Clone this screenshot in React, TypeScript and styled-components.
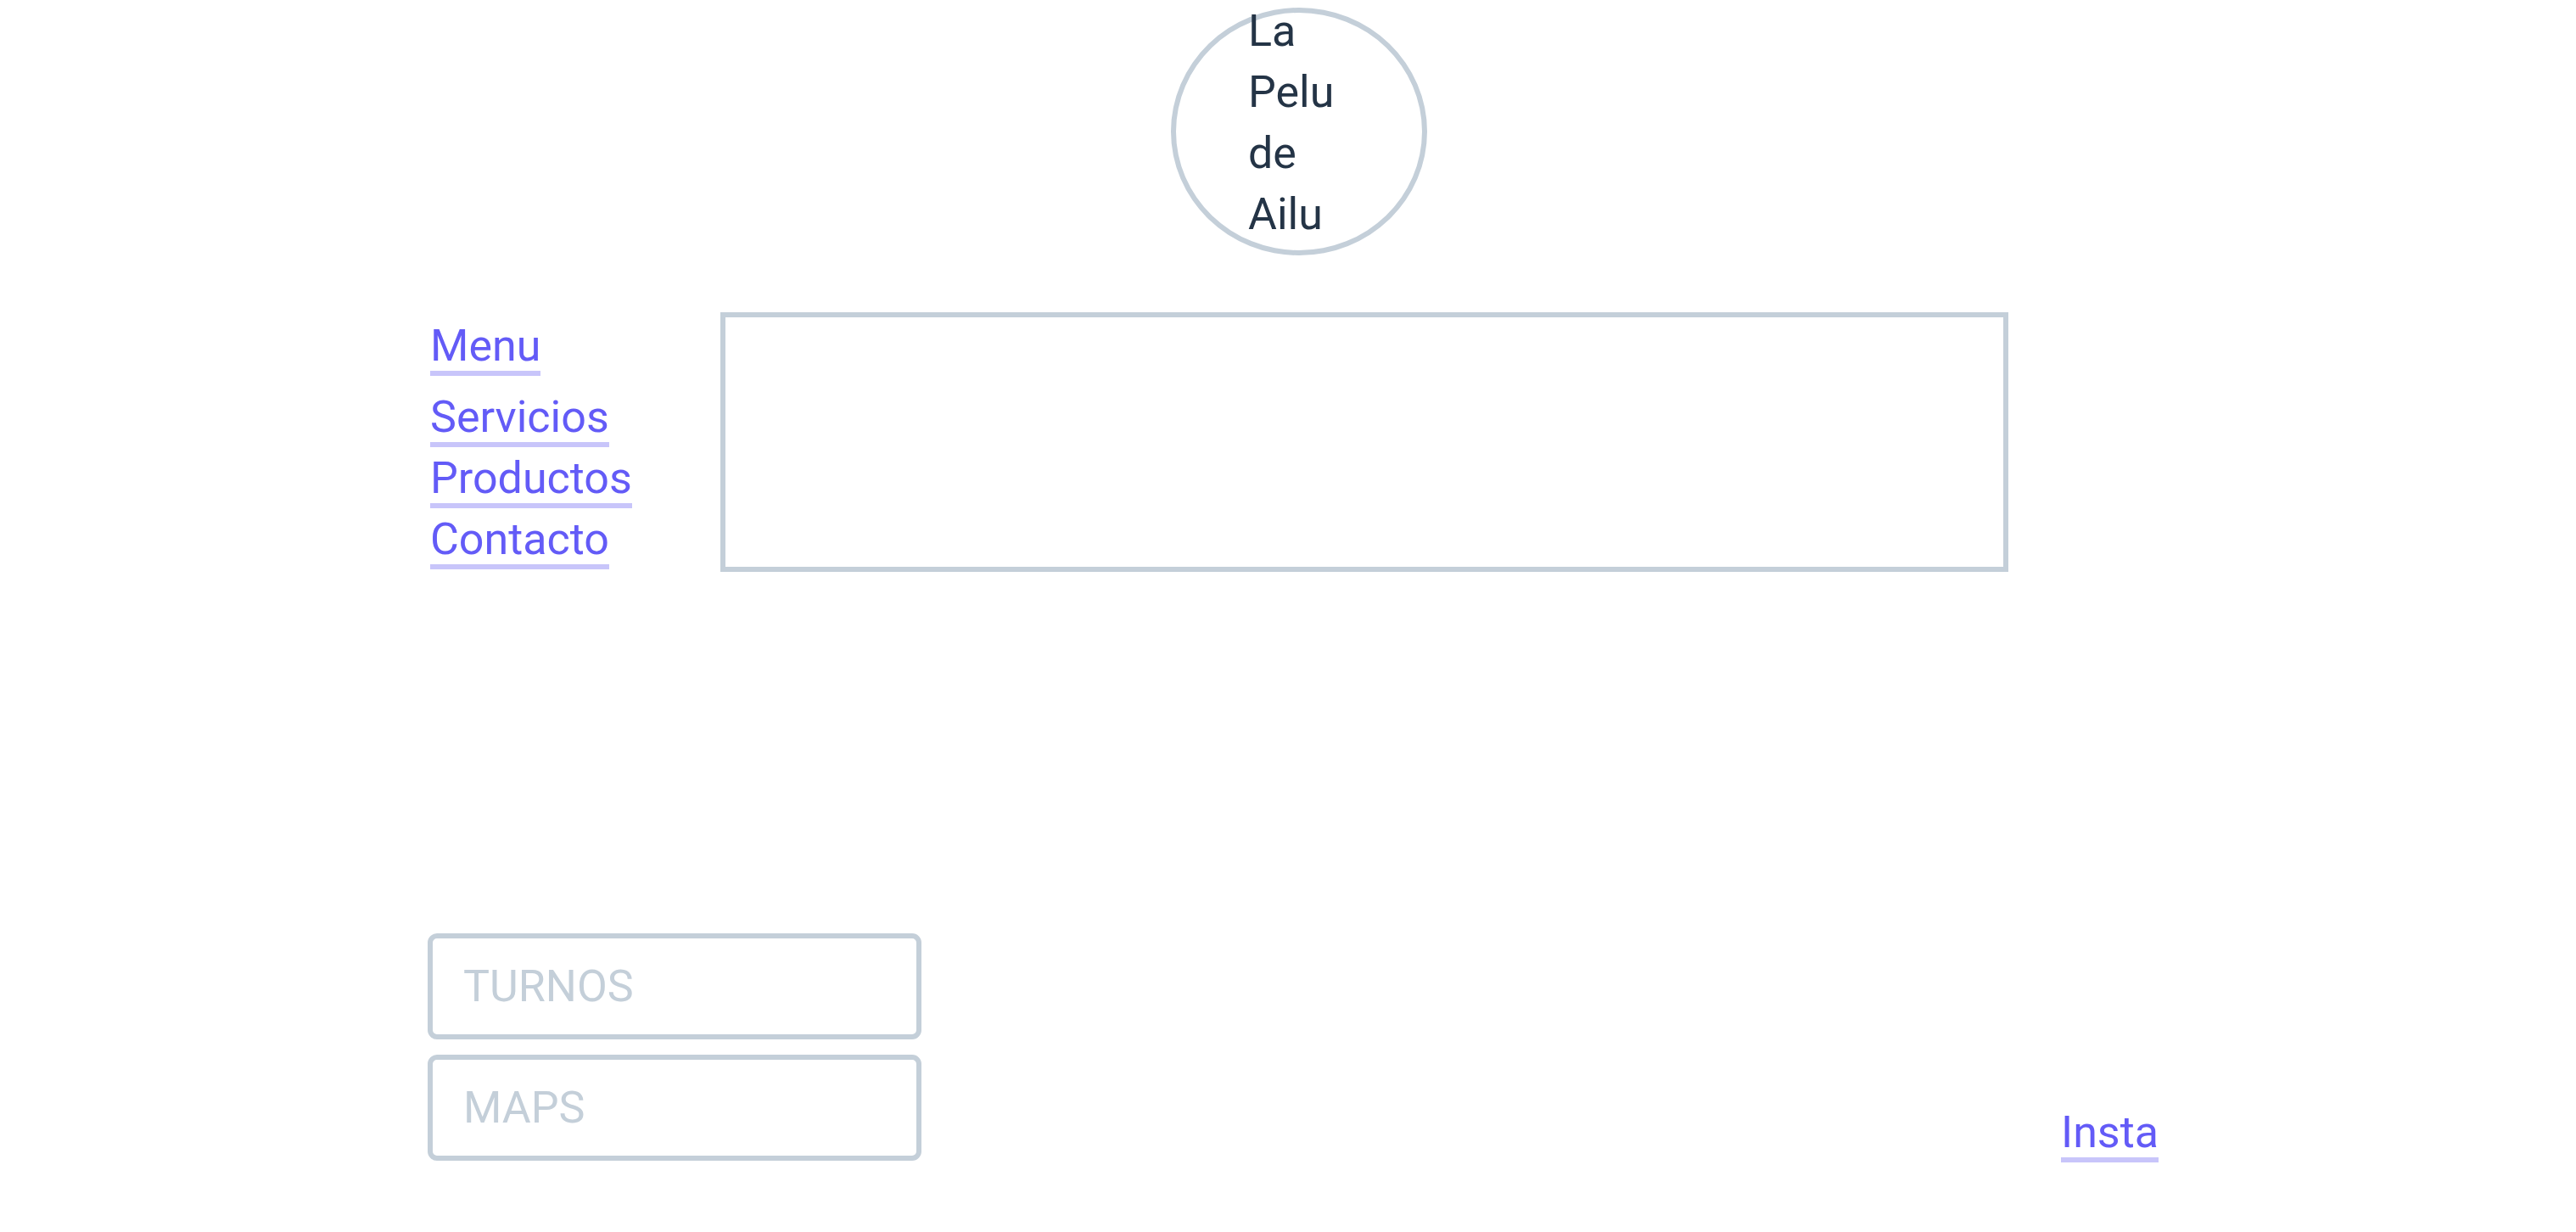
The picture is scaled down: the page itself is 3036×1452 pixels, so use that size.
import React from 'react';
import styled, { createGlobalStyle } from 'styled-components';

const GlobalStyle = createGlobalStyle`
  html, body {
    margin: 0;
    padding: 0;
    background: #ffffff;
  }
  body {
    font-family: Roboto, 'Noto Sans', sans-serif;
  }
`;

const Page = styled.div`
  box-sizing: border-box;
  min-height: 1452px;
  padding: 9px 492px 0 502px;
  display: flex;
  flex-direction: column;
`;

const Header = styled.header`
  display: flex;
  justify-content: center;
  padding-left: 16px;
`;

const Logo = styled.div`
  box-sizing: border-box;
  width: 302px;
  height: 292px;
  border: 6px solid #c4cfd9;
  border-radius: 50%;
  padding-left: 85px;
`;

const Title = styled.h1`
  margin: -14px 0 0;
  width: min-content;
  font-size: 52px;
  font-weight: 400;
  line-height: 72px;
  color: #243446;
`;

const MainRow = styled.main`
  display: flex;
  align-items: flex-start;
  margin-top: 67px;
`;

const Nav = styled.nav`
  box-sizing: border-box;
  width: 347px;
  padding: 11px 0 0 5px;
  display: flex;
  flex-direction: column;
  align-items: flex-start;
  gap: 8px;
`;

const NavLink = styled.a<{ $spaced?: boolean }>`
  display: inline-block;
  font-size: 52px;
  line-height: 58px;
  color: #635bf7;
  text-decoration: none;
  border-bottom: 6px solid #c8c5fa;
  margin-bottom: ${({ $spaced }) => ($spaced ? '12px' : '0')};
`;

const ContentBox = styled.section`
  box-sizing: border-box;
  width: 1518px;
  height: 306px;
  border: 6px solid #c4cfd9;
`;

const Footer = styled.footer`
  display: flex;
  justify-content: space-between;
  align-items: flex-end;
  margin-top: 426px;
`;

const ButtonStack = styled.div`
  display: flex;
  flex-direction: column;
  gap: 18px;
  margin-left: 2px;
`;

const OutlineButton = styled.button`
  box-sizing: border-box;
  width: 582px;
  height: 125px;
  display: flex;
  align-items: center;
  padding: 0 0 0 36px;
  background: #ffffff;
  border: 6px solid #c4cfd9;
  border-radius: 11px;
  font-family: Roboto, 'Noto Sans', sans-serif;
  font-size: 52px;
  color: #c4cfd9;
  cursor: pointer;
`;

const SocialLink = styled(NavLink)`
  margin-bottom: -2px;
`;

const App: React.FC = () => {
  const links = ['Servicios', 'Productos', 'Contacto'];

  return (
    <>
      <GlobalStyle />
      <Page>
        <Header>
          <Logo>
            <Title>La Pelu de Ailu</Title>
          </Logo>
        </Header>

        <MainRow>
          <Nav>
            <NavLink href="#" $spaced>
              Menu
            </NavLink>
            {links.map((label) => (
              <NavLink key={label} href="#">
                {label}
              </NavLink>
            ))}
          </Nav>
          <ContentBox />
        </MainRow>

        <Footer>
          <ButtonStack>
            <OutlineButton>TURNOS</OutlineButton>
            <OutlineButton>MAPS</OutlineButton>
          </ButtonStack>
          <SocialLink href="#">Insta</SocialLink>
        </Footer>
      </Page>
    </>
  );
};

export default App;
